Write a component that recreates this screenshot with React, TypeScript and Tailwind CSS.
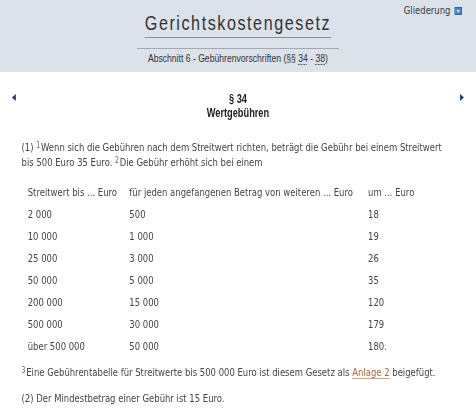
import React from "react";

const rows: [string, string, string][] = [
  ["2 000", "500", "18"],
  ["10 000", "1 000", "19"],
  ["25 000", "3 000", "26"],
  ["50 000", "5 000", "35"],
  ["200 000", "15 000", "120"],
  ["500 000", "30 000", "179"],
  ["über 500 000", "50 000", "180."],
];

function Arrow({ dir }: { dir: "left" | "right" }) {
  return (
    <svg width="6" height="7" viewBox="0 0 6 7" className="block">
      {dir === "left" ? (
        <polygon points="5.5,0 5.5,7 0.5,3.5" fill="#1d3d68" />
      ) : (
        <polygon points="0.5,0 0.5,7 5.5,3.5" fill="#1d3d68" />
      )}
    </svg>
  );
}

function Sup({ n }: { n: string }) {
  return (
    <span className="inline-block align-top text-[8px] leading-[9px] mt-[1px] mr-[1px] text-[#666]">
      {n}
    </span>
  );
}

export default function App() {
  return (
    <div className="w-[476px] h-[416px] overflow-hidden bg-white">
      <div
        className="w-[618px] origin-top-left scale-x-[0.77] text-[#444]"
        style={{ fontFamily: '"DejaVu Sans", Verdana, sans-serif' }}
      >
        {/* Header */}
        <div className="relative h-[72px] bg-[#dce2ea] flex flex-col items-center pt-[9px]">
          <div className="absolute top-[4px] right-[18px] flex items-center gap-[5px] text-[11px] leading-[14px] text-[#3a3a3a]">
            <span>Gliederung</span>
            <svg width="10" height="8" viewBox="0 0 10 8" className="block">
              <rect x="0" y="0" width="10" height="8" fill="#2f67b0" />
              <rect x="1" y="1" width="8" height="6" fill="#4d86cc" />
              <polygon points="3,3 7,3 5,5.5" fill="#ffffff" />
            </svg>
          </div>
          <h1
            className="text-[21px] leading-[28px] tracking-[2px] text-[#333] border-b border-[#8a8f96] font-normal"
            style={{ fontFamily: '"Liberation Sans", Arial, sans-serif' }}
          >
            Gerichtskostengesetz
          </h1>
          <div className="mt-[10px] h-px w-[262px] bg-[#a4a9b0]" />
          <div
            className="mt-[2px] text-[11.2px] leading-[14px] text-[#333]"
            style={{ fontFamily: '"Liberation Sans", Arial, sans-serif' }}
          >
            Abschnitt 6 - Gebührenvorschriften (§§{" "}
            <span className="underline decoration-dotted underline-offset-2">34</span> -{" "}
            <span className="underline decoration-dotted underline-offset-2">38</span>)
          </div>
        </div>

        {/* Navigation + heading */}
        <div className="flex items-start justify-between px-[15px] pt-[20px]">
          <div className="mt-[2px]">
            <Arrow dir="left" />
          </div>
          <div
            className="text-center text-[12px] leading-[14px] font-bold text-[#222]"
            style={{ fontFamily: '"Liberation Sans", Arial, sans-serif' }}
          >
            <div>§ 34</div>
            <div>Wertgebühren</div>
          </div>
          <div className="mt-[2px]">
            <Arrow dir="right" />
          </div>
        </div>

        {/* Body */}
        <div className="pl-[28px] pr-[28px] text-[11px] leading-[15px]">
          <p className="mt-[20px]">
            (1) <Sup n="1" />Wenn sich die Gebühren nach dem Streitwert richten, beträgt die Gebühr
            bei einem Streitwert bis 500 Euro 35 Euro. <Sup n="2" />Die Gebühr erhöht sich bei
            einem
          </p>

          <div className="mt-[12px] grid grid-cols-[132px_310px_1fr] pl-[8px]">
            <div className="h-[21px] flex items-center">Streitwert bis ... Euro</div>
            <div className="h-[21px] flex items-center">
              für jeden angefangenen Betrag von weiteren ... Euro
            </div>
            <div className="h-[21px] flex items-center">um ... Euro</div>
            {rows.map((r) => (
              <React.Fragment key={r[0]}>
                <div className="h-[22px] flex items-center">{r[0]}</div>
                <div className="h-[22px] flex items-center">{r[1]}</div>
                <div className="h-[22px] flex items-center">{r[2]}</div>
              </React.Fragment>
            ))}
          </div>

          <p className="mt-[8px]">
            <Sup n="3" />Eine Gebührentabelle für Streitwerte bis 500 000 Euro ist diesem Gesetz
            als{" "}
            <span className="text-[#b2622e] underline underline-offset-2 decoration-[#d9a07a]">
              Anlage 2
            </span>{" "}
            beigefügt.
          </p>

          <p className="mt-[11px]">(2) Der Mindestbetrag einer Gebühr ist 15 Euro.</p>
        </div>
      </div>
    </div>
  );
}
